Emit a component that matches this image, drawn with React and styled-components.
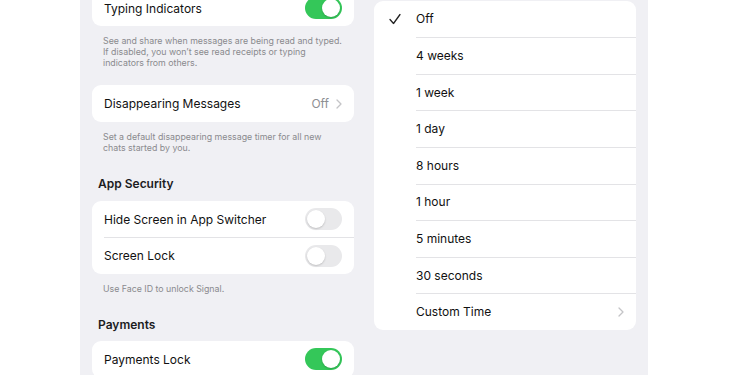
import React from "react";
import styled, { createGlobalStyle } from "styled-components";

const Global = createGlobalStyle`
	html, body { margin: 0; padding: 0; background: #fff; }
	body { font-family: Inter, "Noto Sans", sans-serif; -webkit-font-smoothing: antialiased; }
`;

const Page = styled.div`
	width: 750px;
	height: 375px;
	overflow: hidden;
	display: flex;
	background: #fff;
`;

const Panel = styled.div`
	margin-left: 80px;
	width: 568px;
	height: 375px;
	background: #f0f0f4;
	display: flex;
	gap: 20px;
	padding: 0 12px;
	box-sizing: border-box;
	overflow: hidden;
`;

const Column = styled.div`
	width: 262px;
	display: flex;
	flex-direction: column;
	margin-top: ${({ offset }) => offset || 0}px;
`;

const Card = styled.div`
	background: #fff;
	border-radius: 9px;
	overflow: hidden;
	flex-shrink: 0;
`;

const Row = styled.div`
	height: 36.6px;
	display: flex;
	align-items: center;
	padding: 0 12px 0 ${({ indent }) => indent || 12}px;
	position: relative;
	box-sizing: border-box;
	font-size: 12px;
	color: #111;

	&:not(:first-child)::before {
		content: "";
		position: absolute;
		top: 0;
		right: 0;
		left: ${({ indent }) => indent || 12}px;
		border-top: 0.8px solid #e3e3e6;
	}
`;

const Label = styled.span`
	flex: 1;
`;

const Value = styled.span`
	color: #8e8e93;
	margin-right: 7px;
`;

const Footer = styled.div`
	padding: 9px 8px 0 11px;
	font-size: 8.8px;
	line-height: 11px;
	color: #8a8a8e;
	margin-bottom: ${({ gap }) => gap}px;
`;

const Header = styled.div`
	padding-left: 6px;
	font-size: 12px;
	font-weight: 600;
	line-height: 16px;
	color: #1c1c1e;
	margin-bottom: 8.5px;
`;

const Track = styled.div`
	width: 37px;
	height: 22px;
	border-radius: 11px;
	background: ${({ on }) => (on ? "#34c759" : "#e9e9eb")};
	position: relative;
	flex-shrink: 0;
`;

const Knob = styled.div`
	position: absolute;
	top: 2px;
	left: ${({ on }) => (on ? 17 : 2)}px;
	width: 18px;
	height: 18px;
	border-radius: 50%;
	background: #fff;
	box-shadow: 0 1px 2px rgba(0, 0, 0, 0.18);
`;

const CheckSlot = styled.span`
	position: absolute;
	left: 15px;
	top: 50%;
	transform: translateY(-50%);
	display: flex;
`;

const Toggle = ({ on }) => (
	<Track on={on ? 1 : 0}>
		<Knob on={on ? 1 : 0} />
	</Track>
);

const Chevron = () => (
	<svg width="6" height="10" viewBox="0 0 6 10">
		<path d="M1 1l4 4-4 4" fill="none" stroke="#c4c4c7" strokeWidth="1.3" strokeLinecap="round" strokeLinejoin="round" />
	</svg>
);

const Check = () => (
	<svg width="12" height="11" viewBox="0 0 12 11">
		<path d="M1 6l3.5 4L11 1" fill="none" stroke="#222" strokeWidth="1.3" strokeLinecap="round" strokeLinejoin="round" />
	</svg>
);

const timers = ["Off", "4 weeks", "1 week", "1 day", "8 hours", "1 hour", "5 minutes", "30 seconds"];

export default function App() {
	return (
		<Page>
			<Global />
			<Panel>
				<Column offset={-10.3}>
					<Card>
						<Row>
							<Label>Typing Indicators</Label>
							<Toggle on />
						</Row>
					</Card>
					<Footer gap={17}>
						See and share when messages are being read and typed.
						<br />
						If disabled, you won’t see read receipts or typing indicators from others.
					</Footer>
					<Card>
						<Row>
							<Label>Disappearing Messages</Label>
							<Value>Off</Value>
							<Chevron />
						</Row>
					</Card>
					<Footer gap={23.5}>
						Set a default disappearing message timer for all new chats started by you.
					</Footer>
					<Header>App Security</Header>
					<Card>
						<Row>
							<Label>Hide Screen in App Switcher</Label>
							<Toggle />
						</Row>
						<Row>
							<Label>Screen Lock</Label>
							<Toggle />
						</Row>
					</Card>
					<Footer gap={22.5}>Use Face ID to unlock Signal.</Footer>
					<Header>Payments</Header>
					<Card>
						<Row>
							<Label>Payments Lock</Label>
							<Toggle on />
						</Row>
					</Card>
				</Column>
				<Column offset={0.7}>
					<Card>
						{timers.map((t, i) => (
							<Row key={t} indent={42}>
								{i === 0 && (
									<CheckSlot>
										<Check />
									</CheckSlot>
								)}
								<Label>{t}</Label>
							</Row>
						))}
						<Row indent={42}>
							<Label>Custom Time</Label>
							<Chevron />
						</Row>
					</Card>
				</Column>
			</Panel>
		</Page>
	);
}
